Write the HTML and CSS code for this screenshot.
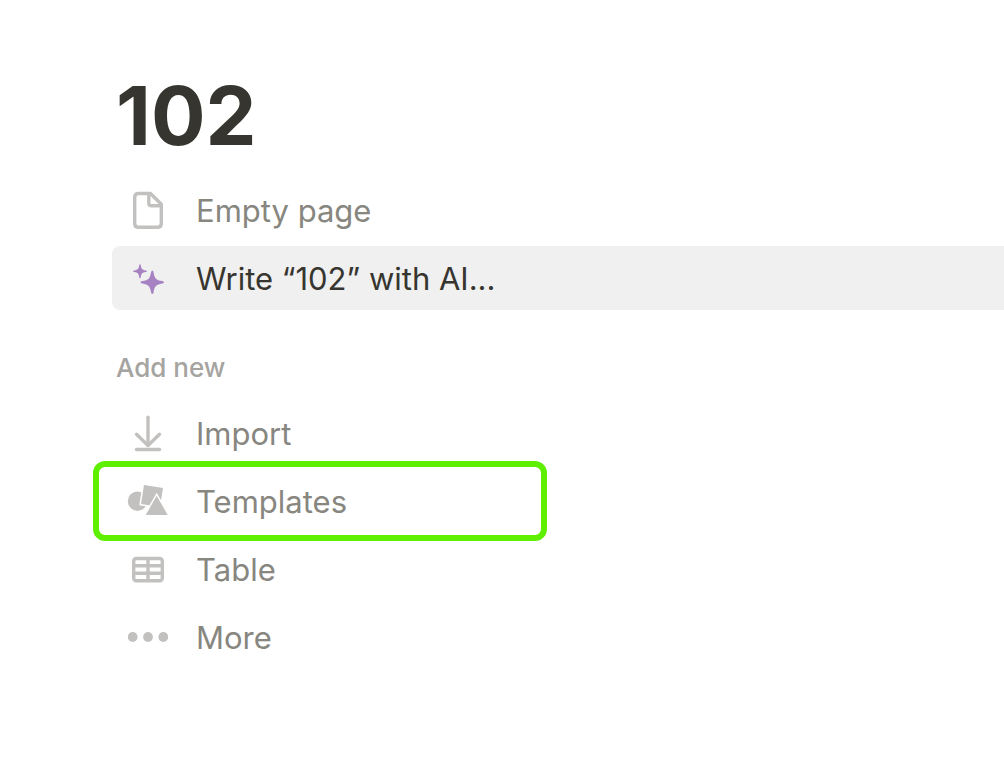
FILE: index.html
```html
<!DOCTYPE html>
<html lang="en">
<head>
  <meta charset="UTF-8">
  <meta name="viewport" content="width=device-width, initial-scale=1.0">
  <title>102</title>
  <link rel="stylesheet" href="styles.css">
</head>
<body>
  <main class="page">
    <h1>102</h1>

    <div class="menu">
      <button class="item" type="button">
        <svg class="icon line" viewBox="0 0 40 40" aria-hidden="true">
          <path d="M10.5 3.5H22.5L33.3 14.3V33.5Q33.3 37.3 29.5 37.3H10.5Q6.7 37.3 6.7 33.5V7.3Q6.7 3.5 10.5 3.5Z"/>
          <path d="M20.8 4V13Q20.8 15.8 23.6 15.8H33"/>
        </svg>
        <span class="label">Empty page</span>
      </button>
      <button class="item active" type="button">
        <svg class="icon ai" viewBox="0 0 40 40" aria-hidden="true">
          <path d="M24.3 12.5Q25.2 12.5 25.5 14.2C26.8 20.8 27.8 21.8 34.4 23.1Q36 23.5 36 24.3Q36 25.1 34.4 25.5C27.8 26.8 26.8 27.8 25.5 34.4Q25.1 36 24.3 36Q23.5 36 23.1 34.4C21.8 27.8 20.8 26.8 14.2 25.5Q12.5 25.1 12.5 24.3Q12.5 23.5 14.2 23.1C20.8 21.8 21.8 20.8 23.1 14.2Q23.4 12.5 24.3 12.5Z"/>
          <path d="M12 6.2Q12.6 6.2 12.8 7.6C13.5 11.2 14.1 11.8 17.7 12.5Q19 12.8 19 13.3Q19 13.8 17.7 14.1C14.1 14.8 13.5 15.4 12.8 19Q12.6 20.4 12 20.4Q11.4 20.4 11.2 19C10.5 15.4 9.9 14.8 6.3 14.1Q5 13.8 5 13.3Q5 12.8 6.3 12.5C9.9 11.8 10.5 11.2 11.2 7.6Q11.4 6.2 12 6.2Z"/>
        </svg>
        <span class="label">Write “102” with AI...</span>
      </button>
    </div>

    <h2>Add new</h2>

    <div class="menu">
      <button class="item" type="button">
        <svg class="icon line" viewBox="0 0 40 40" aria-hidden="true">
          <path d="M20 4.3V32"/>
          <path d="M8.5 21.2L20 32.5L31.5 21.2"/>
          <path d="M8.5 36.5H31.5"/>
        </svg>
        <span class="label">Import</span>
      </button>
      <button class="item marked" type="button">
        <svg class="icon" viewBox="0 0 40 40" aria-hidden="true">
          <circle cx="9.5" cy="20.2" r="9.7"/>
          <path class="cut" d="M16 4L35 7L32 26L13 23Z"/>
          <path class="cut" d="M28.7 14.7L39.7 34H17.7Z"/>
        </svg>
        <span class="label">Templates</span>
      </button>
      <button class="item" type="button">
        <svg class="icon line" viewBox="0 0 40 40" aria-hidden="true">
          <rect x="5.7" y="9.5" width="28.6" height="22.2" rx="2.6"/>
          <path d="M20 10V31M6 16.8H34M6 24.2H34"/>
        </svg>
        <span class="label">Table</span>
      </button>
      <button class="item" type="button">
        <svg class="icon" viewBox="0 0 40 40" aria-hidden="true">
          <circle cx="4.7" cy="20" r="4.9"/>
          <circle cx="20" cy="20" r="4.9"/>
          <circle cx="35.3" cy="20" r="4.9"/>
        </svg>
        <span class="label">More</span>
      </button>
    </div>
  </main>
</body>
</html>
```

FILE: styles.css
```css
body {
  margin: 0;
  font-family: Inter, "Liberation Sans", sans-serif;
  color: #37352f;
  background-color: #fff;
}
.page {
  padding: 68px 0 80px 112px;
}
h1 {
  margin: 0 0 14px;
  padding-left: 4px;
  font-size: 81px;
  line-height: 96px;
  font-weight: 700;
}
h2 {
  margin: 40px 0 15px;
  padding-left: 4px;
  font-size: 26px;
  line-height: 36px;
  font-weight: 500;
  color: #a5a4a1;
}
.menu {
  display: flex;
  flex-direction: column;
  gap: 4px;
}
.item {
  position: relative;
  display: flex;
  align-items: center;
  gap: 28px;
  height: 64px;
  padding: 0 16px;
  border: none;
  border-radius: 8px 0 0 8px;
  background: none;
  font-family: inherit;
  font-size: 31px;
  line-height: 40px;
  color: #87867f;
  text-align: left;
  cursor: pointer;
}
.label {
  padding-top: 1px;
}
.active {
  background-color: #f0f0f0;
  color: #37352f;
}
/* green frame around the highlighted entry */
.marked::after {
  content: "";
  position: absolute;
  top: -8px;
  left: -19px;
  box-sizing: border-box;
  width: 454px;
  height: 80px;
  border: 6px solid #5ff000;
  border-radius: 12px;
}
.icon {
  flex: none;
  width: 40px;
  height: 40px;
  overflow: visible;
  fill: #c2c1bf;
}
.line {
  fill: none;
  stroke: #c2c1bf;
  stroke-width: 3.4;
  stroke-linecap: round;
  stroke-linejoin: round;
}
.ai {
  fill: #a782c3;
}
.cut {
  stroke: #fff;
  stroke-width: 3;
  paint-order: stroke;
}
```
